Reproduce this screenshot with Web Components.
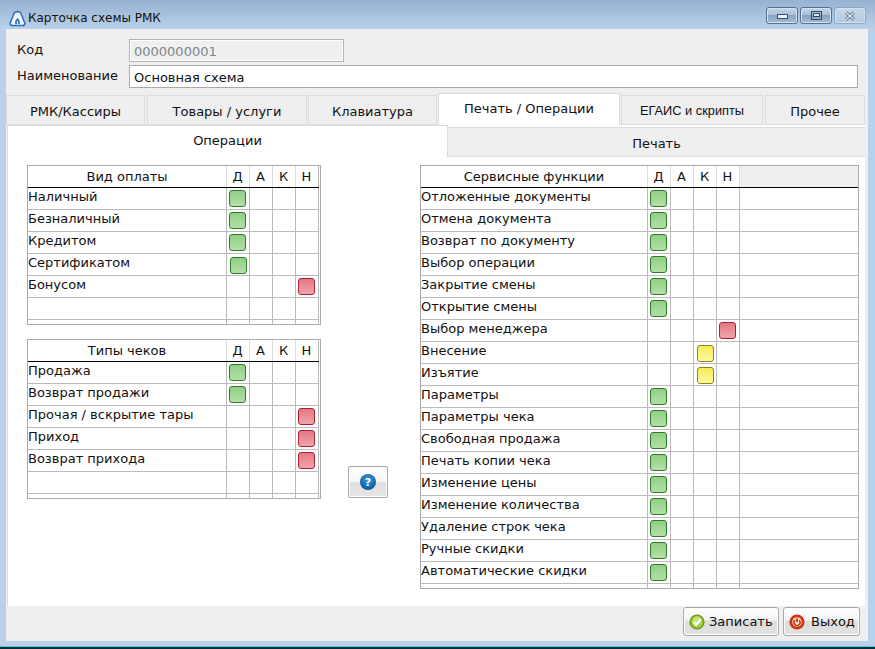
<!DOCTYPE html>
<html lang="ru">
<head>
<meta charset="utf-8">
<title>Карточка схемы РМК</title>
<style>
  html, body { margin: 0; padding: 0; background: #b9d1ea; overflow: hidden; }
  body { font: 13px "DejaVu Sans", Verdana, sans-serif; color: #111; }
</style>
</head>
<body>

<rmk-window heading="Карточка схемы РМК">
  <rmk-field slot="form" label="Код" value="0000000001" disabled width="215"></rmk-field>
  <rmk-field slot="form" label="Наименование" value="Основная схема" width="729"></rmk-field>

  <rmk-tabs slot="tabs">
    <rmk-tab w="139">РМК/Кассиры</rmk-tab>
    <rmk-tab w="160" gap="2">Товары / услуги</rmk-tab>
    <rmk-tab w="129" gap="1">Клавиатура</rmk-tab>
    <rmk-tab w="182" gap="1" active>Печать / Операции</rmk-tab>
    <rmk-tab w="142" gap="1" small>ЕГАИС и скрипты</rmk-tab>
    <rmk-tab w="100" gap="2">Прочее</rmk-tab>
  </rmk-tabs>

  <rmk-subtabs slot="subtabs"></rmk-subtabs>

  <rmk-grid slot="left" heading="Вид оплаты" rows='[["Наличный","g0"],["Безналичный","g0"],["Кредитом","g0"],["Сертификатом","g0s"],["Бонусом","r3"],["",""]]'></rmk-grid>
  <rmk-grid slot="left" heading="Типы чеков" rows='[["Продажа","g0"],["Возврат продажи","g0"],["Прочая / вскрытие тары","r3"],["Приход","r3"],["Возврат прихода","r3"],["",""]]'></rmk-grid>

  <rmk-help slot="help"></rmk-help>

  <rmk-grid slot="right" heading="Сервисные функции" wide rows='[["Отложенные документы","g0"],["Отмена документа","g0"],["Возврат по документу","g0"],["Выбор операции","g0"],["Закрытие смены","g0"],["Открытие смены","g0"],["Выбор менеджера","r3"],["Внесение","y2s"],["Изъятие","y2s"],["Параметры","g0"],["Параметры чека","g0"],["Свободная продажа","g0"],["Печать копии чека","g0"],["Изменение цены","g0"],["Изменение количества","g0"],["Удаление строк чека","g0"],["Ручные скидки","g0"],["Автоматические скидки","g0"]]'></rmk-grid>

  <rmk-button slot="footer" kind="ok" w="96">Записать</rmk-button>
  <rmk-button slot="footer" kind="exit" w="77">Выход</rmk-button>
</rmk-window>

<script>
class RmkWindow extends HTMLElement {
  constructor() {
    super();
    const heading = this.getAttribute("heading");
    this.attachShadow({ mode: "open" }).innerHTML = `
    <style>
      :host { display: flex; flex-direction: column; width: 875px; height: 649px; box-sizing: border-box;
        background: #b9d1ea; border-bottom: 2px solid #0b2a33; box-shadow: inset 0 -1px 0 #3fd0e0; }
      .title { height: 29px; flex: none; display: flex; align-items: center; box-sizing: border-box; padding: 7px 9px 0 9px;
        background: linear-gradient(#97b2d0, #b9d1ea); font: 13px "DejaVu Sans", sans-serif; color: #111; }
      .title svg.logo { width: 17px; height: 17px; margin-right: 2px; flex: none; }
      .title span { flex: 1; font-size: 12px; }
      .ctl { display: flex; gap: 2px; margin-top: -5px; }
      .ctl i { display: flex; align-items: center; justify-content: center; width: 30px; height: 15px;
        border: 1px solid #55708f; border-radius: 3px;
        background: linear-gradient(#c3d4e7 0, #a9c1da 45%, #86a3c1 50%, #a5bdd6 100%); box-shadow: inset 0 0 0 1px #d5e2ef; }
      .ctl i.off { border-color: #8da6c2; background: linear-gradient(#c5d7ea, #b5cbe2); }
      .body { flex: 1; margin: 0 7px 6px 6px; background: #efefef; display: flex; flex-direction: column; min-height: 0; }
      .form { flex: none; height: 64px; box-sizing: border-box; padding-top: 10px; display: flex; flex-direction: column; gap: 3px; }
      .page { flex: none; margin-left: 1px; margin-right: 3px; height: 481px; background: #fff; display: flex; flex-direction: column;
        border-left: 1px solid #ddd; }
      .cols { flex: 1; display: flex; padding: 8px 0 0 19px; }
      .left { width: 294px; display: flex; flex-direction: column; gap: 14px; }
      .mid { width: 99px; display: flex; flex-direction: column; justify-content: flex-start; padding-top: 301px; padding-left: 27px; box-sizing: border-box; }
      .footer { flex: 1; display: flex; justify-content: flex-end; gap: 4px; padding: 1px 8px 0 0; }
    </style>
    <div class="title">
      <svg class="logo" viewBox="0 0 17 17"><path d="M8.5 1.5 L11.5 2.5 L15.8 13 Q16 15.5 13.5 15.5 L3.5 15.5 Q1 15.5 1.2 13 L5.5 2.5 Z" fill="#f2f7fc" stroke="#2f6db5" stroke-width="1.5" stroke-linejoin="round"/><path d="M8.5 8 C7 9.5 6 11 6 13 Q6 14.5 8.5 14.5 Q11 14.5 11 13 C11 11 10 9.5 8.5 8 Z" fill="#2f6db5"/><path d="M8.5 11 V15" stroke="#f2f7fc" stroke-width="1.2"/></svg>
      <span>${heading}</span>
      <div class="ctl">
        <i><svg width="11" height="6"><rect x=".5" y="1.5" width="10" height="4" fill="#eef3f8" stroke="#3c4f66"/></svg></i>
        <i><svg width="11" height="9"><rect x=".5" y=".5" width="10" height="8" fill="none" stroke="#33465c"/><rect x="2.5" y="2.5" width="6" height="3" fill="#dce7f2" stroke="#33465c"/></svg></i>
        <i class="off"><svg width="12" height="10"><path d="M2 1.5 L10 8.5 M10 1.5 L2 8.5" stroke="#5f7286" stroke-width="3"/><path d="M2 1.5 L10 8.5 M10 1.5 L2 8.5" stroke="#e7eef5" stroke-width="1.2"/></svg></i>
      </div>
    </div>
    <div class="body">
      <div class="form"><slot name="form"></slot></div>
      <slot name="tabs"></slot>
      <div class="page">
        <slot name="subtabs"></slot>
        <div class="cols">
          <div class="left"><slot name="left"></slot></div>
          <div class="mid"><slot name="help"></slot></div>
          <slot name="right"></slot>
        </div>
      </div>
      <div class="footer"><slot name="footer"></slot></div>
    </div>`;
  }
}

class RmkField extends HTMLElement {
  constructor() {
    super();
    const off = this.hasAttribute("disabled");
    this.attachShadow({ mode: "open" }).innerHTML = `
    <style>
      :host { display: flex; align-items: center; height: 23px; padding-left: 11px; }
      label { width: 112px; flex: none; margin-top: -3px; }
      div { box-sizing: border-box; height: 23px; width: ${this.getAttribute("width")}px; padding: 3px 0 0 4px; line-height: 17px;
        border: 1px solid ${off ? "#b4b4b4" : "#a9a9a9"}; background: ${off ? "#efefef" : "#fff"}; color: ${off ? "#7d868c" : "#111"};
        ${off ? "box-shadow: inset 0 0 0 1px #fff;" : ""} }
    </style>
    <label>${this.getAttribute("label")}</label><div>${this.getAttribute("value")}</div>`;
  }
}

class RmkTabs extends HTMLElement {
  constructor() {
    super();
    this.attachShadow({ mode: "open" }).innerHTML = `
    <style>
      :host { display: flex; flex: none; height: 32px; align-items: flex-end; box-sizing: border-box; }
    </style>
    <slot></slot>`;
  }
}

class RmkTab extends HTMLElement {
  constructor() {
    super();
    const on = this.hasAttribute("active");
    const small = this.hasAttribute("small");
    this.attachShadow({ mode: "open" }).innerHTML = `
    <style>
      :host { display: flex; box-sizing: border-box; align-items: center; justify-content: center;
        width: ${this.getAttribute("w")}px; margin-left: ${this.getAttribute("gap") || 0}px;
        height: ${on ? 32 : 30}px; padding-bottom: ${on ? 3 : 0}px; padding-top: ${on || small ? 0 : 2}px; background: ${on ? "#fff" : "#efefef"};
        border: 1px solid #dcdcdc; border-bottom: ${on ? "0" : "1px solid #dcdcdc"};
        font: ${small ? 12.8 : 13}px ${small ? '"Liberation Sans"' : '"DejaVu Sans"'}, sans-serif; }
    </style>
    <slot></slot>`;
  }
}

class RmkSubtabs extends HTMLElement {
  constructor() {
    super();
    this.attachShadow({ mode: "open" }).innerHTML = `
    <style>
      :host { display: flex; height: 32px; flex: none; font-size: 13px; }
      div { display: flex; align-items: center; justify-content: center; box-sizing: border-box; }
      .on { width: 440px; background: #fff; padding-bottom: 2px; border-right: 1px solid #dcdcdc; border-top: 1px solid #dcdcdc; }
      .off { flex: 1; margin-top: 2px; height: 30px; padding-top: 3px; background: #efefef; border-top: 1px solid #dcdcdc; border-bottom: 1px solid #dcdcdc; }
    </style>
    <div class="on">Операции</div><div class="off">Печать</div>`;
  }
}

// rows: [label, code], code = colour + column + optional "s" for the slightly shifted dot
class RmkGrid extends HTMLElement {
  constructor() {
    super();
    const wide = this.hasAttribute("wide");
    const rows = JSON.parse(this.getAttribute("rows"));
    const cols = ["Д", "А", "К", "Н"];
    const cells = code => cols.map((c, i) => {
      const hit = code && Number(code[1]) == i;
      return `<b>${hit ? `<rmk-dot color="${code[0]}" ${code[2] ? "shift" : ""}></rmk-dot>` : ""}</b>`;
    }).join("");
    const body = rows.map(r => `<div class="row"><span>${r[0]}</span>${cells(r[1])}${wide ? "<em></em>" : ""}</div>`).join("");
    this.attachShadow({ mode: "open" }).innerHTML = `
    <style>
      :host { display: block; box-sizing: border-box; width: ${wide ? 439 : 294}px; height: ${wide ? 424 : 160}px;
        border: 1px solid #aaa; overflow: hidden; font-size: 13px; }
      .head, .row { display: grid; grid-template-columns: ${wide ? "226px repeat(4, 23px) 1fr" : "198px repeat(4, 23px) 1px"}; }
      .head { height: 22px; box-sizing: border-box; border-bottom: 1px solid #000; margin-right: ${wide ? 0 : 1}px; }
      .head span, .head b { text-align: center; line-height: 21px; font-weight: normal; }
      .head b { border-left: 1px solid #dcdcdc; padding-right: 1px; }
      .head em { background: #efefef; border-left: 1px solid #dcdcdc; }
      .row { height: 22px; box-sizing: border-box; border-bottom: 1px solid #bbb; margin-right: ${wide ? 0 : 1}px; }
      .row span { line-height: 17px; white-space: nowrap; }
      .row b { border-left: 1px solid #bbb; font-weight: normal; }
      .row em { border-left: 1px solid #bbb; }
      ${wide ? "" : ".head::after, .row::after { content: ''; border-left: 1px solid #bbb; }"}
    </style>
    <div class="head"><span>${this.getAttribute("heading")}</span>${cols.map(c => `<b>${c}</b>`).join("")}${wide ? "<em></em>" : ""}</div>
    ${body}
    <div class="row">${"<span></span>"}${cells("")}${wide ? "<em></em>" : ""}</div>`;
  }
}

class RmkDot extends HTMLElement {
  constructor() {
    super();
    const palette = {
      g: ["#b4e0a8", "#8ecf82", "#2f7d2c"],
      r: ["#f2a4ab", "#e27883", "#ad1f32"],
      y: ["#fdf9a0", "#f5ec58", "#8f8414"]
    }[this.getAttribute("color")];
    const s = this.hasAttribute("shift") ? 1 : 0;
    this.attachShadow({ mode: "open" }).innerHTML = `
    <style>
      :host { display: block; box-sizing: border-box; width: 17px; height: 17px; margin: ${2 + s}px 0 0 ${2 + s}px;
        border: 1px solid ${palette[2]}; border-radius: 3px; background: linear-gradient(${palette[1]}, ${palette[0]}); }
    </style>`;
  }
}

class RmkHelp extends HTMLElement {
  constructor() {
    super();
    this.attachShadow({ mode: "open" }).innerHTML = `
    <style>
      :host { display: flex; align-items: center; justify-content: center; width: 40px; height: 32px; box-sizing: border-box;
        border: 1px solid #a8a8a8; border-radius: 2px; background: linear-gradient(#fff 0, #f4f4f4 50%, #dedede 52%, #e6e6e6 100%);
        box-shadow: inset 0 0 0 1px #fff; }
      span { display: flex; align-items: center; justify-content: center; width: 16px; height: 16px; border-radius: 50%;
        background: radial-gradient(circle at 50% 35%, #3a9bd8, #0b5a9c 75%); color: #fff; font: bold 11px "DejaVu Sans", sans-serif; }
    </style>
    <span>?</span>`;
  }
}

class RmkButton extends HTMLElement {
  constructor() {
    super();
    const ok = this.getAttribute("kind") == "ok";
    const icon = ok
      ? `<svg width="16" height="16" viewBox="0 0 16 16"><circle cx="8" cy="8" r="7.6" fill="#6f9f10"/><circle cx="8" cy="8" r="6" fill="#a4cf45"/><circle cx="8" cy="6.5" r="4" fill="#c6e27f"/><path d="M4.4 8 L7.2 10.8 L11.8 5.2" fill="none" stroke="#fff" stroke-width="2.2"/></svg>`
      : `<svg width="16" height="16" viewBox="0 0 16 16"><circle cx="8" cy="8" r="7.6" fill="#cf3512"/><circle cx="8" cy="8" r="4.8" fill="#f8d9c4"/><path d="M8 4.4 V8" stroke="#c2340f" stroke-width="1.8"/><path d="M5.8 6.2 A3.1 3.1 0 1 0 10.2 6.2" fill="none" stroke="#c2340f" stroke-width="1.4"/></svg>`;
    this.attachShadow({ mode: "open" }).innerHTML = `
    <style>
      :host { display: flex; align-items: center; box-sizing: border-box; width: ${this.getAttribute("w")}px; height: 29px;
        padding-left: 5px; gap: ${ok ? 4 : 6}px; border: 1px solid #a8a8a8; border-radius: 3px;
        background: linear-gradient(#fff 0, #f3f3f3 45%, #dcdcdc 50%, #e2e2e2 100%); box-shadow: inset 0 0 0 1px #fff; font-size: 13px; }
      svg { flex: none; }
    </style>
    ${icon}<slot></slot>`;
  }
}

customElements.define("rmk-dot", RmkDot);
customElements.define("rmk-window", RmkWindow);
customElements.define("rmk-field", RmkField);
customElements.define("rmk-tabs", RmkTabs);
customElements.define("rmk-tab", RmkTab);
customElements.define("rmk-subtabs", RmkSubtabs);
customElements.define("rmk-grid", RmkGrid);
customElements.define("rmk-help", RmkHelp);
customElements.define("rmk-button", RmkButton);
</script>
</body>
</html>
